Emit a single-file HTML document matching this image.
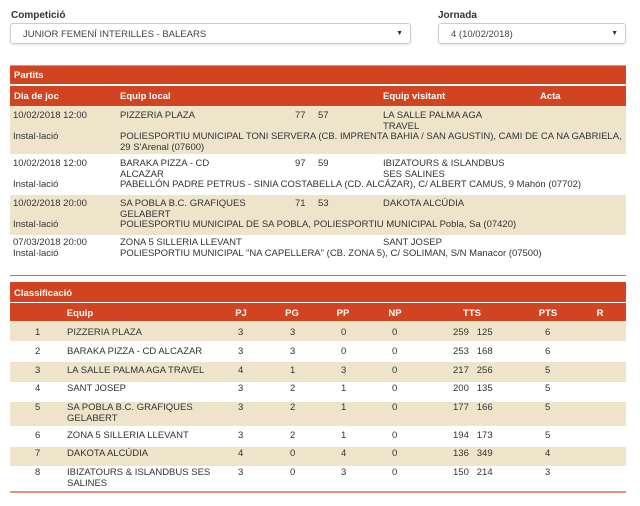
<!DOCTYPE html><html><head><meta charset="utf-8"><style>
*{margin:0;padding:0;box-sizing:border-box}
body{width:640px;height:506px;background:#fff;font-family:"Liberation Sans",Arial,sans-serif;font-size:9.5px;color:#333;position:relative;overflow:hidden}
.a{position:absolute;white-space:nowrap}
.lbl{font-size:10px;font-weight:bold;color:#333}
.sel{position:absolute;height:21px;border:1px solid #ccc;border-radius:3px;box-shadow:0 1px 2px rgba(0,0,0,.1);font-size:9.5px;padding:5px 0 0 12px;color:#444}
.sel b{position:absolute;right:7px;top:6px;font-size:7px;color:#333}
.bar{position:absolute;left:10px;width:616px;background:#d04422;color:#fff;font-weight:bold}
.row{position:absolute;left:10px;width:616px}
.bg{background:#ede4c9}
.c{text-align:center;transform:translateX(-50%)}
</style></head><body>
<div class="a lbl" style="left:11px;top:10px">Competició</div>
<div class="a lbl" style="left:438px;top:10px">Jornada</div>
<div class="sel" style="left:10px;top:23px;width:401px">JUNIOR FEMENÍ INTERILLES - BALEARS<b>▼</b></div>
<div class="sel" style="left:438px;top:23px;width:188px">4 (10/02/2018)<b>▼</b></div>

<div class="bar" style="top:65px;height:19px;border-top:1px solid #e8907a"><span class="a" style="left:4px;top:4px">Partits</span></div>
<div class="bar" style="top:86px;height:20px"><span class="a" style="left:4px;top:5px">Dia de joc</span><span class="a" style="left:110px;top:5px">Equip local</span><span class="a" style="left:373px;top:5px">Equip visitant</span><span class="a" style="left:530px;top:5px">Acta</span></div>

<div class="row bg" style="top:106px;height:48px"></div>
<div class="row bg" style="top:195px;height:40px"></div>
<div class="row" style="top:275px;height:1px;background:#e06a4e"></div>
<div style="position:absolute;left:0;top:0;line-height:10.5px">
<div class="a" style="left:13px;top:111px">10/02/2018 12:00</div>
<div class="a" style="left:120px;top:111px">PIZZERIA PLAZA</div>
<div class="a" style="left:295px;top:111px">77</div><div class="a" style="left:318px;top:111px">57</div>
<div class="a" style="left:383px;top:111px">LA SALLE PALMA AGA<br>TRAVEL</div>
<div class="a" style="left:13px;top:132px">Instal·lació</div>
<div class="a" style="left:120px;top:132px">POLIESPORTIU MUNICIPAL TONI SERVERA (CB. IMPRENTA BAHIA / SAN AGUSTIN), CAMI DE CA NA GABRIELA,<br>29 S'Arenal (07600)</div>

<div class="a" style="left:13px;top:159px">10/02/2018 12:00</div>
<div class="a" style="left:120px;top:159px">BARAKA PIZZA - CD<br>ALCAZAR</div>
<div class="a" style="left:295px;top:159px">97</div><div class="a" style="left:318px;top:159px">59</div>
<div class="a" style="left:383px;top:159px">IBIZATOURS &amp; ISLANDBUS<br>SES SALINES</div>
<div class="a" style="left:13px;top:180px">Instal·lació</div>
<div class="a" style="left:120px;top:180px">PABELLÓN PADRE PETRUS - SINIA COSTABELLA (CD. ALCÁZAR), C/ ALBERT CAMUS, 9 Mahón (07702)</div>

<div class="a" style="left:13px;top:199px">10/02/2018 20:00</div>
<div class="a" style="left:120px;top:199px">SA POBLA B.C. GRAFIQUES<br>GELABERT</div>
<div class="a" style="left:295px;top:199px">71</div><div class="a" style="left:318px;top:199px">53</div>
<div class="a" style="left:383px;top:199px">DAKOTA ALCÚDIA</div>
<div class="a" style="left:13px;top:220px">Instal·lació</div>
<div class="a" style="left:120px;top:220px">POLIESPORTIU MUNICIPAL DE SA POBLA, POLIESPORTIU MUNICIPAL Pobla, Sa (07420)</div>

<div class="a" style="left:13px;top:238px">07/03/2018 20:00<br>Instal·lació</div>
<div class="a" style="left:120px;top:238px">ZONA 5 SILLERIA LLEVANT<br>POLIESPORTIU MUNICIPAL "NA CAPELLERA" (CB. ZONA 5), C/ SOLIMAN, S/N Manacor (07500)</div>
<div class="a" style="left:383px;top:238px">SANT JOSEP</div>
</div>

<div class="bar" style="top:282px;height:20px"><span class="a" style="left:4px;top:6px">Classificació</span></div>
<div class="bar" style="top:303px;height:18px">
<span class="a c" style="left:70px;top:5px">Equip</span><span class="a c" style="left:231px;top:5px">PJ</span><span class="a c" style="left:282px;top:5px">PG</span><span class="a c" style="left:333px;top:5px">PP</span><span class="a c" style="left:385px;top:5px">NP</span><span class="a c" style="left:462px;top:5px">TTS</span><span class="a c" style="left:538px;top:5px">PTS</span><span class="a c" style="left:590px;top:5px">R</span></div>
<div class="row bg" style="top:321px;height:20px"></div>
<div class="row bg" style="top:362px;height:20px"></div>
<div class="row bg" style="top:402px;height:24px"></div>
<div class="row bg" style="top:447px;height:19px"></div>
<div class="row" style="top:491px;height:2px;background:#e8907a"></div>
<div style="position:absolute;left:0;top:0;line-height:10.5px">
<div class="a" style="left:35px;top:328px">1</div><div class="a" style="left:67px;top:328px">PIZZERIA PLAZA</div><div class="a" style="left:238px;top:328px">3</div><div class="a" style="left:290px;top:328px">3</div><div class="a" style="left:341px;top:328px">0</div><div class="a" style="left:392px;top:328px">0</div><div class="a" style="left:453px;top:328px">259&nbsp;&nbsp;&nbsp;125</div><div class="a" style="left:545px;top:328px">6</div>
<div class="a" style="left:35px;top:347px">2</div><div class="a" style="left:67px;top:347px">BARAKA PIZZA - CD ALCAZAR</div><div class="a" style="left:238px;top:347px">3</div><div class="a" style="left:290px;top:347px">3</div><div class="a" style="left:341px;top:347px">0</div><div class="a" style="left:392px;top:347px">0</div><div class="a" style="left:453px;top:347px">253&nbsp;&nbsp;&nbsp;168</div><div class="a" style="left:545px;top:347px">6</div>
<div class="a" style="left:35px;top:366px">3</div><div class="a" style="left:67px;top:366px">LA SALLE PALMA AGA TRAVEL</div><div class="a" style="left:238px;top:366px">4</div><div class="a" style="left:290px;top:366px">1</div><div class="a" style="left:341px;top:366px">3</div><div class="a" style="left:392px;top:366px">0</div><div class="a" style="left:453px;top:366px">217&nbsp;&nbsp;&nbsp;256</div><div class="a" style="left:545px;top:366px">5</div>
<div class="a" style="left:35px;top:384px">4</div><div class="a" style="left:67px;top:384px">SANT JOSEP</div><div class="a" style="left:238px;top:384px">3</div><div class="a" style="left:290px;top:384px">2</div><div class="a" style="left:341px;top:384px">1</div><div class="a" style="left:392px;top:384px">0</div><div class="a" style="left:453px;top:384px">200&nbsp;&nbsp;&nbsp;135</div><div class="a" style="left:545px;top:384px">5</div>
<div class="a" style="left:35px;top:403px">5</div><div class="a" style="left:67px;top:403px">SA POBLA B.C. GRAFIQUES<br>GELABERT</div><div class="a" style="left:238px;top:403px">3</div><div class="a" style="left:290px;top:403px">2</div><div class="a" style="left:341px;top:403px">1</div><div class="a" style="left:392px;top:403px">0</div><div class="a" style="left:453px;top:403px">177&nbsp;&nbsp;&nbsp;166</div><div class="a" style="left:545px;top:403px">5</div>
<div class="a" style="left:35px;top:431px">6</div><div class="a" style="left:67px;top:431px">ZONA 5 SILLERIA LLEVANT</div><div class="a" style="left:238px;top:431px">3</div><div class="a" style="left:290px;top:431px">2</div><div class="a" style="left:341px;top:431px">1</div><div class="a" style="left:392px;top:431px">0</div><div class="a" style="left:453px;top:431px">194&nbsp;&nbsp;&nbsp;173</div><div class="a" style="left:545px;top:431px">5</div>
<div class="a" style="left:35px;top:449px">7</div><div class="a" style="left:67px;top:449px">DAKOTA ALCÚDIA</div><div class="a" style="left:238px;top:449px">4</div><div class="a" style="left:290px;top:449px">0</div><div class="a" style="left:341px;top:449px">4</div><div class="a" style="left:392px;top:449px">0</div><div class="a" style="left:453px;top:449px">136&nbsp;&nbsp;&nbsp;349</div><div class="a" style="left:545px;top:449px">4</div>
<div class="a" style="left:35px;top:468px">8</div><div class="a" style="left:67px;top:468px">IBIZATOURS &amp; ISLANDBUS SES<br>SALINES</div><div class="a" style="left:238px;top:468px">3</div><div class="a" style="left:290px;top:468px">0</div><div class="a" style="left:341px;top:468px">3</div><div class="a" style="left:392px;top:468px">0</div><div class="a" style="left:453px;top:468px">150&nbsp;&nbsp;&nbsp;214</div><div class="a" style="left:545px;top:468px">3</div>
</div>
</body></html>
